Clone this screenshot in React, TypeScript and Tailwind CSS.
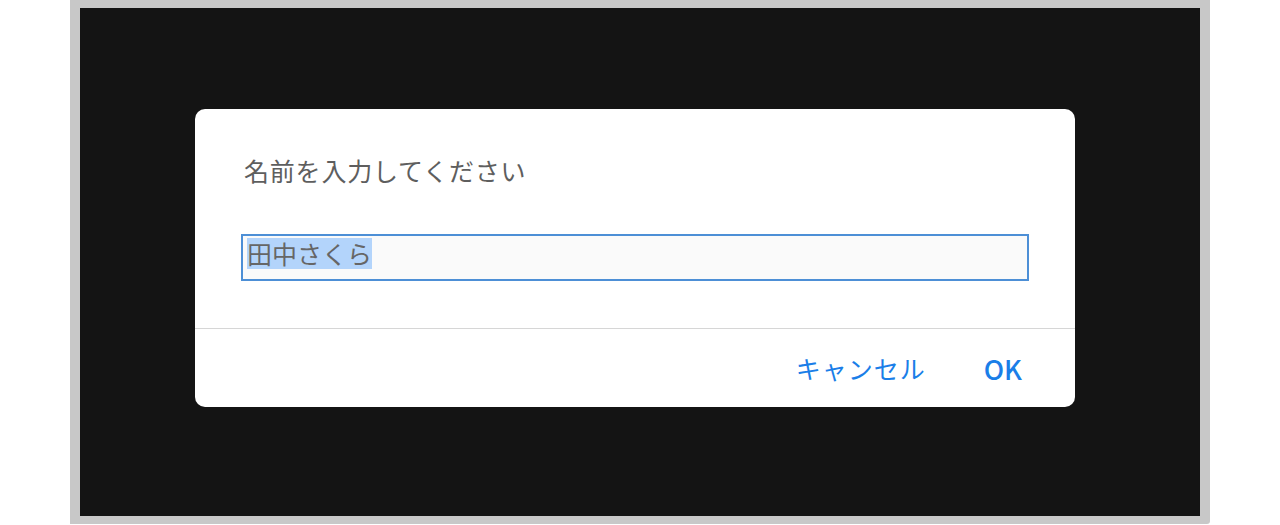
export default function App() {
  return (
    <div className="w-full h-[525px] bg-white">
      <div className="ml-[70px] w-[1140px] h-[524px] bg-[#c8c8c8] pt-[8px] px-[10px] pb-[8px] rounded-br-[3px]">
        <div
          className="h-full bg-[#141414] pt-[101px] pl-[115px]"
          style={{ fontFamily: '"Noto Sans CJK JP", "Noto Sans", sans-serif' }}
        >
          {/* Prompt dialog */}
          <div className="w-[880px] bg-white rounded-[10px]">
            <div className="px-[46px] pt-[43px] pb-[47px]">
              <p className="ml-[3px] h-[36px] leading-[36px] text-[25px] tracking-[0.8px] text-[#5e5e5e]">
                名前を入力してください
              </p>
              <div className="mt-[46px] h-[47px] border-2 border-[#4d8fd6] bg-[#fafafa] pl-[4px] pt-[2px]">
                <span className="inline-block h-[31px] leading-[31px] text-[25px] text-[#666666] bg-[#b3d4fb]">
                  田中さくら
                </span>
              </div>
            </div>
            <div className="h-px bg-[#d6d6d6]" />
            <div className="h-[78px] flex items-center justify-end pr-[53px] gap-[58px] text-[25px] text-[#1a7ee8]">
              <button className="leading-none tracking-[1px]">キャンセル</button>
              <button className="leading-none font-medium text-[27px]">OK</button>
            </div>
          </div>
        </div>
      </div>
    </div>
  );
}
